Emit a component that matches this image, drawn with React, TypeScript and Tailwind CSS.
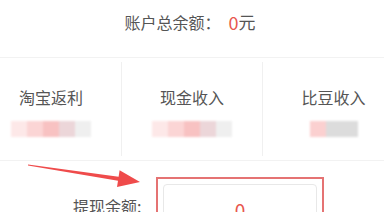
import React from "react";

const font = { fontFamily: '"Noto Sans CJK SC", "Noto Sans", sans-serif' };

type Stat = {
  label: string;
  blocks: string[];
};

const stats: Stat[] = [
  { label: "淘宝返利", blocks: ["bg-[#fde8e8]", "bg-[#fbd5d5]", "bg-[#f8c2c2]", "bg-[#ecd6d9]", "bg-[#efefef]"] },
  { label: "现金收入", blocks: ["bg-[#fde8e8]", "bg-[#fbd5d5]", "bg-[#f8c2c2]", "bg-[#ecd6d9]", "bg-[#efefef]"] },
  { label: "比豆收入", blocks: ["bg-[#fbd0d0]", "bg-[#dcdcdc]", "bg-[#dcdcdc]"] },
];

function StatColumn({ stat, last }: { stat: Stat; last: boolean }) {
  return (
    <div
      className={
        "flex h-[94px] w-[141px] shrink-0 flex-col items-center pt-[25px] " +
        (last ? "" : "border-r border-[#f0f0f0]")
      }
    >
      <div className="text-[16px] leading-[20px] text-[#555555]">{stat.label}</div>
      <div className="mt-[14px] flex blur-[1px]">
        {stat.blocks.map((c, i) => (
          <div key={i} className={"h-[16px] w-[16px] " + c} />
        ))}
      </div>
    </div>
  );
}

export default function App() {
  return (
    <div className="relative h-[212px] w-[384px] overflow-hidden bg-white" style={font}>
      <div className="flex h-[57px] items-end justify-center pb-[25px] pr-[4px]">
        <span className="text-[16px] leading-[20px] text-[#555555]">账户总余额：</span>
        <span className="ml-[8px] text-[18px] leading-[20px] text-[#e8574e]">0</span>
        <span className="text-[17px] leading-[20px] text-[#555555]">元</span>
      </div>

      <div className="border-y border-[#f2f2f2] py-[4px]">
        <div className="-ml-[19px] flex">
          {stats.map((s, i) => (
            <StatColumn key={s.label} stat={s} last={i === stats.length - 1} />
          ))}
        </div>
      </div>

      <div className="flex pl-[73px] pt-[16px]">
        <div className="mt-[19px] w-[83px] text-[16px] leading-[20px] text-[#555555]">提现余额:</div>
        <div className="w-[168px] border-2 border-[#e57373] p-[5px]">
          <div className="flex h-[60px] justify-center rounded-[4px] border border-[#e8e8e8] pt-[14px]">
            <span className="text-[19px] leading-[22px] text-[#e8574e]">0</span>
          </div>
        </div>
      </div>

      <svg className="absolute left-0 top-0" width="384" height="212" viewBox="0 0 384 212">
        <polygon
          points="28,164.5 118.6,176.7 119.6,170.3 140,182 117,187.1 118,180.7 28,165.5"
          fill="#ef4b4b"
        />
      </svg>
    </div>
  );
}
